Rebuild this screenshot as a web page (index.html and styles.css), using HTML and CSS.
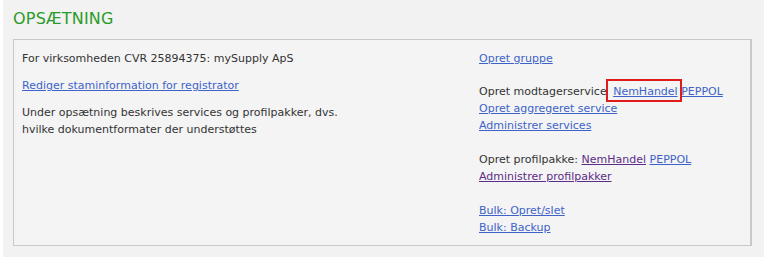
FILE: index.html
```html
<!DOCTYPE html>
<html lang="da">
<head>
    <meta charset="UTF-8">
    <title>Opsætning</title>
    <link rel="stylesheet" href="styles.css">
</head>
<body>
    <div class="page">
        <h1 class="title">OPSÆTNING</h1>
        <div class="setup-box">
            <div class="col col-left">
                <p>For virksomheden CVR 25894375: mySupply ApS</p>
                <p><a href="#">Rediger staminformation for registrator</a></p>
                <p>Under opsætning beskrives services og profilpakker, dvs.<br>hvilke dokumentformater der understøttes</p>
            </div>
            <div class="col col-right">
                <p class="first"><a href="#">Opret gruppe</a></p>
                <p>
                    Opret modtagerservice <span class="marked"><a href="#">NemHandel</a></span> <a href="#">PEPPOL</a><br>
                    <a href="#">Opret aggregeret service</a><br>
                    <a href="#">Administrer services</a>
                </p>
                <p>
                    Opret profilpakke: <a class="visited" href="#">NemHandel</a> <a href="#">PEPPOL</a><br>
                    <a class="visited" href="#">Administrer profilpakker</a>
                </p>
                <p>
                    <a href="#">Bulk: Opret/slet</a><br>
                    <a href="#">Bulk: Backup</a>
                </p>
            </div>
        </div>
    </div>
</body>
</html>
```

FILE: styles.css
```css
/* Global */
body {
    margin: 0;
    padding: 0;
    background-color: #ffffff;
    font-family: 'DejaVu Sans', Verdana, sans-serif;
    font-size: 11px;
    color: #333333;
}

.page {
    margin-left: 3px;
    width: 761px;
    height: 257px;
    padding: 9px 0 0 10px;
    box-sizing: border-box;
    background-color: #f2f2f2;
}

.title {
    margin: 0 0 10px;
    font-size: 16px;
    font-weight: normal;
    letter-spacing: 0.2px;
    color: #2b9a2b;
    line-height: 20px;
}

/* Box */
.setup-box {
    display: flex;
    width: 739px;
    height: 207px;
    box-sizing: border-box;
    padding: 10px 0 0 8px;
    background-color: #f4f4f4;
    border: 1px solid #c9c9c9;
    border-right-width: 2px;
}

.col p {
    margin: 0;
    line-height: 17px;
}

.col-left {
    width: 457px;
}

.col-left p {
    margin-bottom: 10px;
}

.col-right p {
    margin-bottom: 17px;
}

.col-right p.first {
    margin-bottom: 16px;
}

a {
    color: #3d63c9;
}

a.visited {
    color: #5c2d86;
}

.marked {
    position: relative;
    margin-left: 3px;
}

.marked::after {
    content: '';
    position: absolute;
    left: -7px;
    right: -4px;
    top: -6px;
    bottom: -4px;
    border: 2px solid #e01b1b;
}
```
